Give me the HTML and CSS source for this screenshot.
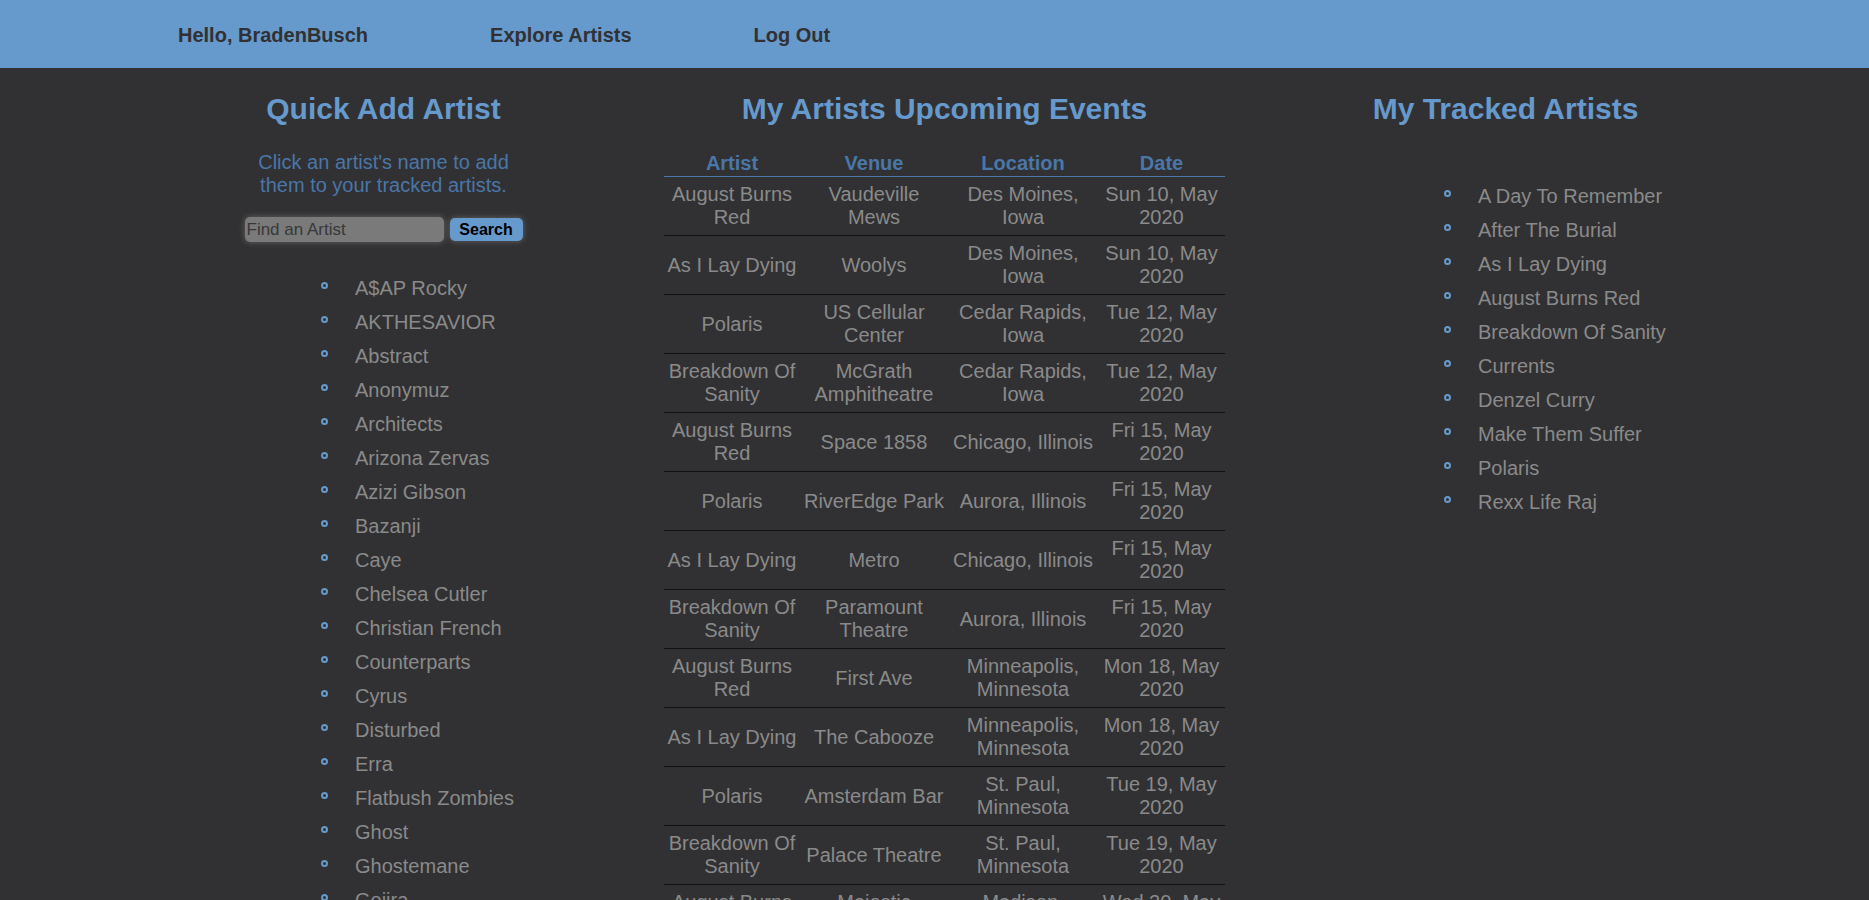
FILE: index.html
```html
<!DOCTYPE html>
<html lang="en">
<head>
<meta charset="utf-8">
<title>Concert Tracker</title>
<link rel="stylesheet" href="styles.css">
</head>
<body>
<header class="topbar">
  <nav class="nav">
    <a class="nav-link" href="#">Hello, BradenBusch</a>
    <a class="nav-link" href="#">Explore Artists</a>
    <a class="nav-link" href="#">Log Out</a>
  </nav>
</header>
<main class="columns">
  <section class="col">
    <h2 class="col-title">Quick Add Artist</h2>
    <p class="hint">Click an artist's name to add them to your tracked artists.</p>
    <form class="search">
      <input class="search-input" type="text" placeholder="Find an Artist">
      <button class="search-btn" type="button">Search</button>
    </form>
    <ul class="artist-list">
      <li><a href="#">A$AP Rocky</a></li>
      <li><a href="#">AKTHESAVIOR</a></li>
      <li><a href="#">Abstract</a></li>
      <li><a href="#">Anonymuz</a></li>
      <li><a href="#">Architects</a></li>
      <li><a href="#">Arizona Zervas</a></li>
      <li><a href="#">Azizi Gibson</a></li>
      <li><a href="#">Bazanji</a></li>
      <li><a href="#">Caye</a></li>
      <li><a href="#">Chelsea Cutler</a></li>
      <li><a href="#">Christian French</a></li>
      <li><a href="#">Counterparts</a></li>
      <li><a href="#">Cyrus</a></li>
      <li><a href="#">Disturbed</a></li>
      <li><a href="#">Erra</a></li>
      <li><a href="#">Flatbush Zombies</a></li>
      <li><a href="#">Ghost</a></li>
      <li><a href="#">Ghostemane</a></li>
      <li><a href="#">Gojira</a></li>
      <li><a href="#">Hollywood Undead</a></li>
      <li><a href="#">I Prevail</a></li>
    </ul>
  </section>
  <section class="col">
    <h2 class="col-title">My Artists Upcoming Events</h2>
    <table class="events">
      <colgroup>
        <col class="c-artist"><col class="c-venue"><col class="c-loc"><col class="c-date">
      </colgroup>
      <thead>
        <tr><th>Artist</th><th>Venue</th><th>Location</th><th>Date</th></tr>
      </thead>
      <tbody>
        <tr><td>August Burns Red</td><td>Vaudeville Mews</td><td>Des Moines, Iowa</td><td>Sun 10, May 2020</td></tr>
        <tr><td>As I Lay Dying</td><td>Woolys</td><td>Des Moines, Iowa</td><td>Sun 10, May 2020</td></tr>
        <tr><td>Polaris</td><td>US Cellular Center</td><td>Cedar Rapids, Iowa</td><td>Tue 12, May 2020</td></tr>
        <tr><td>Breakdown Of Sanity</td><td>McGrath Amphitheatre</td><td>Cedar Rapids, Iowa</td><td>Tue 12, May 2020</td></tr>
        <tr><td>August Burns Red</td><td>Space 1858</td><td>Chicago, Illinois</td><td>Fri 15, May 2020</td></tr>
        <tr><td>Polaris</td><td>RiverEdge Park</td><td>Aurora, Illinois</td><td>Fri 15, May 2020</td></tr>
        <tr><td>As I Lay Dying</td><td>Metro</td><td>Chicago, Illinois</td><td>Fri 15, May 2020</td></tr>
        <tr><td>Breakdown Of Sanity</td><td>Paramount Theatre</td><td>Aurora, Illinois</td><td>Fri 15, May 2020</td></tr>
        <tr><td>August Burns Red</td><td>First Ave</td><td>Minneapolis, Minnesota</td><td>Mon 18, May 2020</td></tr>
        <tr><td>As I Lay Dying</td><td>The Cabooze</td><td>Minneapolis, Minnesota</td><td>Mon 18, May 2020</td></tr>
        <tr><td>Polaris</td><td>Amsterdam Bar</td><td>St. Paul, Minnesota</td><td>Tue 19, May 2020</td></tr>
        <tr><td>Breakdown Of Sanity</td><td>Palace Theatre</td><td>St. Paul, Minnesota</td><td>Tue 19, May 2020</td></tr>
        <tr><td>August Burns Red</td><td>Majestic Theatre</td><td>Madison, Wisconsin</td><td>Wed 20, May 2020</td></tr>
        <tr><td>As I Lay Dying</td><td>The Rave</td><td>Milwaukee, Wisconsin</td><td>Thu 21, May 2020</td></tr>
      </tbody>
    </table>
  </section>
  <section class="col">
    <h2 class="col-title">My Tracked Artists</h2>
    <ul class="artist-list tracked">
      <li><a href="#">A Day To Remember</a></li>
      <li><a href="#">After The Burial</a></li>
      <li><a href="#">As I Lay Dying</a></li>
      <li><a href="#">August Burns Red</a></li>
      <li><a href="#">Breakdown Of Sanity</a></li>
      <li><a href="#">Currents</a></li>
      <li><a href="#">Denzel Curry</a></li>
      <li><a href="#">Make Them Suffer</a></li>
      <li><a href="#">Polaris</a></li>
      <li><a href="#">Rexx Life Raj</a></li>
    </ul>
  </section>
</main>
</body>
</html>
```
FILE: styles.css
```css
html, body {
  margin: 0;
  padding: 0;
}
body {
  background: #313133;
  font-family: "Liberation Sans", Arial, sans-serif;
  color: #8a8a8a;
}
.topbar {
  background: #6699cc;
  height: 68px;
  display: flex;
  align-items: center;
}
.nav {
  display: flex;
  gap: 122px;
  padding-left: 178px;
  padding-top: 2px;
}
.nav-link {
  color: #313133;
  font-weight: bold;
  font-size: 20px;
  text-decoration: none;
}
.columns {
  display: flex;
  padding-left: 103px;
}
.col {
  width: 561px;
  flex: 0 0 561px;
}
.col-title {
  margin: 23px 0 0;
  text-align: center;
  font-size: 30px;
  line-height: 35px;
  font-weight: bold;
  color: #6699cc;
}
.hint {
  width: 280px;
  margin: 25px auto 0;
  text-align: center;
  font-size: 20px;
  line-height: 23px;
  color: #4a76a8;
}
.search {
  display: flex;
  justify-content: center;
  align-items: center;
  gap: 6px;
  margin-top: 20px;
}
.search-input {
  box-sizing: border-box;
  width: 199px;
  height: 25px;
  margin: 0;
  padding: 0 2px;
  border: none;
  border-radius: 5px;
  background: #7a7a7a;
  font-family: "Liberation Sans", Arial, sans-serif;
  font-size: 17px;
  color: #303030;
  box-shadow: 0 0 6px rgba(200, 200, 200, 0.35);
}
.search-input::placeholder {
  color: #383838;
}
.search-btn {
  box-sizing: border-box;
  width: 73px;
  height: 23px;
  margin: 0;
  padding: 0;
  border: none;
  border-radius: 5px;
  background: #6699cc;
  color: #000;
  font-family: "Liberation Sans", Arial, sans-serif;
  font-weight: bold;
  font-size: 16px;
  box-shadow: 0 0 6px rgba(200, 200, 200, 0.35);
}
.artist-list {
  list-style: none;
  margin: 29px 0 0 212px;
  padding-left: 40px;
  font-size: 20px;
  line-height: 34px;
}
.artist-list.tracked {
  margin-top: 53px;
  margin-left: 213px;
}
.artist-list li::before {
  content: "";
  display: inline-block;
  box-sizing: border-box;
  width: 7px;
  height: 7px;
  border: 2px solid #6699cc;
  border-radius: 50%;
  margin-left: -34px;
  margin-right: 27px;
  vertical-align: 6px;
}
.artist-list a {
  color: #8a8a8a;
  text-decoration: none;
}
.events {
  width: 561px;
  margin-top: 24px;
  border-collapse: collapse;
  table-layout: fixed;
  font-size: 20px;
  line-height: 23px;
}
.c-artist { width: 136px; }
.c-venue { width: 148px; }
.c-loc { width: 150px; }
.c-date { width: 127px; }
.events th {
  color: #4a76a8;
  font-weight: bold;
  padding: 2px 2px 1px;
  border-bottom: 1px solid #4a76a8;
  text-align: center;
}
.events td {
  padding: 6px 2px;
  text-align: center;
  vertical-align: middle;
  color: #8a8a8a;
  border-bottom: 1px solid #111;
}
```
